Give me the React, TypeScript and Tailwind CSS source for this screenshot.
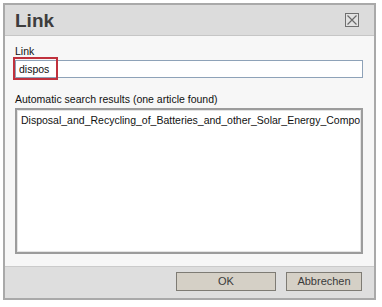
import React from "react";

const font = { fontFamily: '"Liberation Sans", Arial, sans-serif' };

export default function App() {
  return (
    <div className="w-[382px] h-[307px] bg-white pt-[3px] pl-[3px]" style={font}>
      <div className="w-[373px] h-[297px] border-2 border-[#a9a9a9] flex flex-col bg-[#f7f7f7]">
        {/* title bar */}
        <div className="h-[31px] shrink-0 bg-[#dcdcdc] border-b border-[#c6c6c6] flex items-center justify-between pl-[10px] pr-[15px]">
          <span className="text-[19px] font-bold text-[#3d3d3d] leading-none pt-[1px]">Link</span>
          <button className="w-[14px] h-[14px] border border-[#6f6f6f] bg-[#e2e2e2] flex items-center justify-center">
            <svg width="12" height="12" viewBox="0 0 12 12">
              <path d="M1.5 1.5 L10.5 10.5 M10.5 1.5 L1.5 10.5" stroke="#6a6a6a" strokeWidth="1.2" />
            </svg>
          </button>
        </div>

        {/* body */}
        <div className="flex-1 flex flex-col px-[10px] pt-[9px] text-[10.5px] leading-[13px] text-[#111]">
          <label className="block mb-[2px]">Link</label>
          <div className="relative w-[348px]">
            <div className="h-[18px] border border-[#8ea2b8] bg-white flex items-center pl-[3px] text-[10.5px]">
              dispos
            </div>
            <div className="absolute left-[-2px] top-[-3px] w-[45px] h-[23px] border-2 border-[#c0313d] pointer-events-none" />
          </div>
          <label className="block mt-[15px] mb-[2px]">Automatic search results (one article found)</label>
          <div className="w-[348px] h-[146px] border-2 border-[#9c9c9c] bg-white overflow-hidden">
            <div className="border border-[#e4e4e4] h-full pl-[3px] pt-[3px] overflow-hidden">
              <div className="whitespace-nowrap text-[10.5px] leading-[13px]">
                Disposal_and_Recycling_of_Batteries_and_other_Solar_Energy_Components
              </div>
            </div>
          </div>
        </div>

        {/* footer */}
        <div className="h-[32px] shrink-0 bg-[#dedede] border-t border-[#cbcbcb] flex items-center justify-end gap-[10px] pr-[12px] pb-[2px] text-[11px] text-[#3a3a3a]">
          <button className="w-[100px] h-[19px] bg-[#d5d0c6] border border-[#7e7b74] leading-none">OK</button>
          <button className="w-[76px] h-[19px] bg-[#d5d0c6] border border-[#7e7b74] leading-none">Abbrechen</button>
        </div>
      </div>
    </div>
  );
}
